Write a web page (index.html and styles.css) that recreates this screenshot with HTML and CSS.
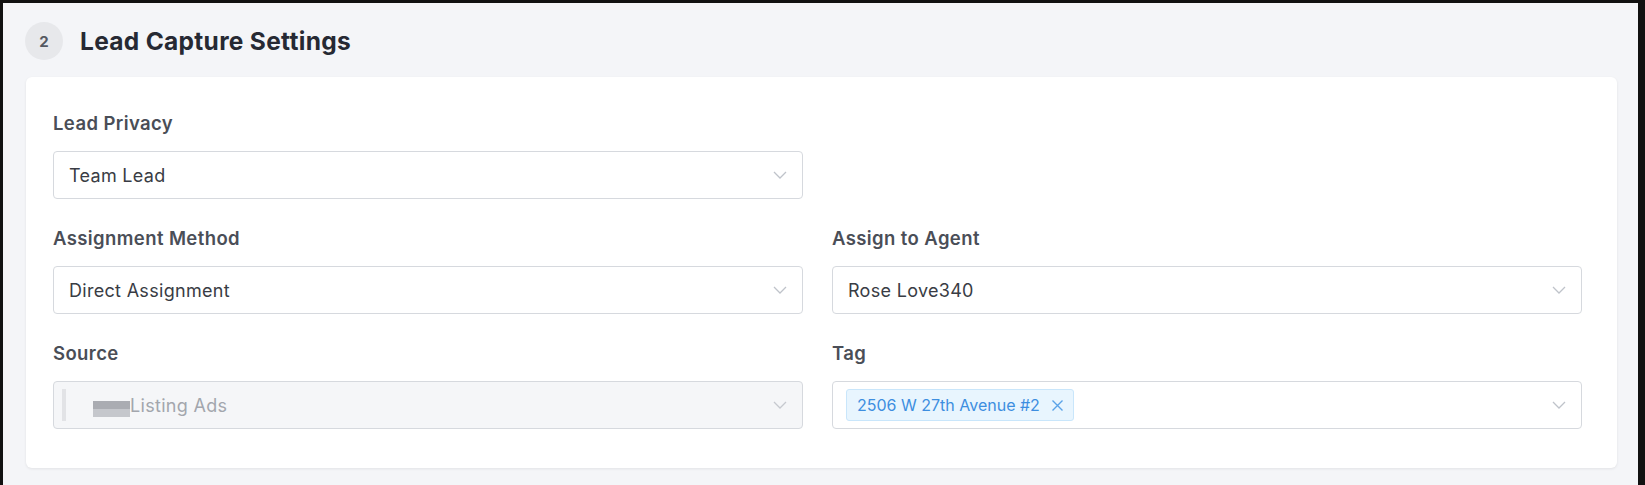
FILE: index.html
```html
<!DOCTYPE html>
<html lang="en">
<head>
  <meta charset="UTF-8" />
  <title>Lead Capture Settings</title>
  <link rel="stylesheet" href="styles.css">
</head>
<body>

<div class="panel">
  <div class="panel-head">
    <div class="step">2</div>
    <h2>Lead Capture Settings</h2>
  </div>

  <div class="card">
    <div class="field">
      <label>Lead Privacy</label>
      <div class="select">
        <span>Team Lead</span>
        <svg class="chev" width="14" height="8" viewBox="0 0 14 8"><path d="M1 1l6 6 6-6" fill="none" stroke="#bfc3ca" stroke-width="1.3"/></svg>
      </div>
    </div>
    <div class="field"></div>

    <div class="field">
      <label>Assignment Method</label>
      <div class="select">
        <span>Direct Assignment</span>
        <svg class="chev" width="14" height="8" viewBox="0 0 14 8"><path d="M1 1l6 6 6-6" fill="none" stroke="#bfc3ca" stroke-width="1.3"/></svg>
      </div>
    </div>
    <div class="field">
      <label>Assign to Agent</label>
      <div class="select">
        <span>Rose Love340</span>
        <svg class="chev" width="14" height="8" viewBox="0 0 14 8"><path d="M1 1l6 6 6-6" fill="none" stroke="#bfc3ca" stroke-width="1.3"/></svg>
      </div>
    </div>

    <div class="field">
      <label>Source</label>
      <div class="select disabled">
        <span class="redact-bar"></span>
        <span class="redact"></span><span>Listing Ads</span>
        <svg class="chev" width="14" height="8" viewBox="0 0 14 8"><path d="M1 1l6 6 6-6" fill="none" stroke="#c6c9cf" stroke-width="1.3"/></svg>
      </div>
    </div>
    <div class="field">
      <label>Tag</label>
      <div class="select tags">
        <span class="chip">2506 W 27th Avenue #2
          <svg width="13" height="13" viewBox="0 0 13 13"><path d="M1.5 1.5l10 10M11.5 1.5l-10 10" stroke="#5aa3e8" stroke-width="1.4"/></svg>
        </span>
        <svg class="chev" width="14" height="8" viewBox="0 0 14 8"><path d="M1 1l6 6 6-6" fill="none" stroke="#bfc3ca" stroke-width="1.3"/></svg>
      </div>
    </div>
  </div>
</div>

</body>
</html>
```

FILE: styles.css
```css
body {
  margin: 0;
  background: #111;
  font-family: Inter, "Noto Sans", Arial, sans-serif;
  height: 485px;
  overflow: hidden;
}
.panel {
  margin: 3px 7px 0 3px;
  height: 482px;
  background: #f4f5f8;
  padding: 19px 0 0 22px;
  box-sizing: border-box;
}
.panel-head {
  display: flex;
  align-items: center;
  height: 38px;
}
.step {
  width: 38px;
  height: 38px;
  border-radius: 50%;
  background: #e7e8eb;
  color: #555962;
  font-weight: 700;
  font-size: 15px;
  display: flex;
  justify-content: center;
  align-items: center;
}
.panel-head h2 {
  margin: 0 0 0 17px;
  font-size: 24.5px;
  letter-spacing: 0.3px;
  font-weight: 700;
  color: #262933;
}
.card {
  margin: 17px 0 0 1px;
  width: 1591px;
  box-sizing: border-box;
  background: #fff;
  border-radius: 6px;
  box-shadow: 0 1px 3px rgba(0,0,0,0.08);
  padding: 35px 35px 39px 27px;
  display: grid;
  grid-template-columns: 750px 750px;
  column-gap: 29px;
  row-gap: 28px;
}
.field label {
  display: block;
  font-size: 18.5px;
  letter-spacing: 0.4px;
  line-height: 22px;
  font-weight: 600;
  color: #4a4e57;
  margin-bottom: 17px;
}
.select {
  height: 48px;
  box-sizing: border-box;
  border: 1px solid #d6d9de;
  border-radius: 4px;
  display: flex;
  align-items: center;
  padding: 0 15px;
  font-size: 18px;
  letter-spacing: 0.3px;
  color: #393c44;
}
.select .chev {
  margin-left: auto;
}
.select.disabled {
  background: #f5f6f8;
  color: #a3a6ad;
  padding-left: 8px;
}
.redact-bar {
  width: 4px;
  height: 32px;
  background: #e2e3e6;
  margin-right: 27px;
}
.redact {
  width: 37px;
  height: 16px;
  margin-top: 8px;
  background: linear-gradient(#aaacb2 0 50%, #c5c7cc 50% 100%);
}
.select.tags {
  padding-left: 13px;
}
.chip {
  height: 32px;
  box-sizing: border-box;
  display: flex;
  align-items: center;
  gap: 11px;
  padding: 0 9px 0 10px;
  background: #e8f5fe;
  border: 1px solid #c9e6fb;
  border-radius: 3px;
  color: #3d8ee0;
  font-size: 16px;
  letter-spacing: 0;
}
```
